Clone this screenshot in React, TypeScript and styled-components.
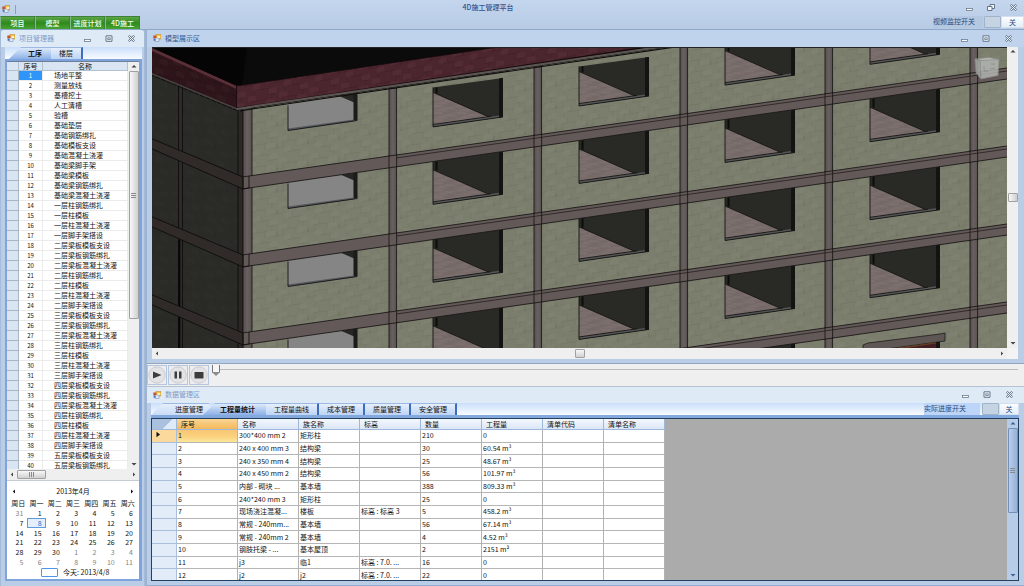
import React from "react";
import styled, { createGlobalStyle, css } from "styled-components";

const Global = createGlobalStyle`
  * { box-sizing: border-box; }
  html, body { margin: 0; padding: 0; background: #b9cde7; }
  body, button, input, table {
    font-family: "Noto Sans CJK SC", "Liberation Sans", sans-serif;
    font-size: 7px;
    line-height: 9px;
    color: #111;
  }
  button { margin: 0; padding: 0; border: 0; background: none; white-space: nowrap; }
  table { border-collapse: separate; border-spacing: 0; table-layout: fixed; }
  th, td { padding: 0; font-weight: 400; text-align: left; white-space: nowrap; overflow: hidden; }
`;

/* ---------- shell ---------- */

const Shell = styled.div`
  display: flex;
  flex-direction: column;
  height: 100vh;
  overflow: hidden;
`;

const TopBar = styled.header`
  flex: none;
  height: 30px;
  background: linear-gradient(#c3d6ee, #b8cbe4);
  border-bottom: 1px solid #8fa8c8;
`;

const TitleRow = styled.div`
  display: grid;
  grid-template-columns: 1fr auto 1fr;
  align-items: center;
  height: 16px;
  padding: 0 6px 2px 2px;
`;

const TitleLeft = styled.div`
  display: flex;
  align-items: center;
  gap: 5px;
  padding-top: 4px;
`;

const Divider = styled.span`
  width: 1px;
  height: 9px;
  background: #8ba0bd;
`;

const AppTitle = styled.h1`
  margin: 0;
  padding-right: 44px;
  font-size: 7px;
  line-height: 10px;
  font-weight: 500;
  color: #33528f;
`;

const WindowButtons = styled.div`
  display: flex;
  justify-content: flex-end;
  gap: 12px;
`;

const WindowButton = styled.button`
  width: 10px;
  height: 9px;
  display: flex;
  align-items: center;
  justify-content: center;
`;

const RibbonRow = styled.div`
  display: flex;
  justify-content: space-between;
  height: 13px;
`;

const RibbonTabs = styled.nav`
  display: flex;
`;

const RibbonTab = styled.button`
  width: 35px;
  height: 13px;
  color: #f4fff0;
  font-weight: 500;
  background: linear-gradient(#5da646, #2f8a1c 50%, #46a232);
  border: 1px solid #3f7f3c;
  border-bottom: 0;
  border-left-color: #86b98a;
  line-height: 10px;
`;

const SwitchWrap = styled.div<{ $wide?: boolean }>`
  display: flex;
  height: 12px;
  color: #2b4c7c;
  line-height: 11px;
  span {
    background: ${(p) => (p.$wide ? "#b4c8e1" : "#bcd5f8")};
    padding-right: ${(p) => (p.$wide ? "8px" : "14px")};
    margin-right: ${(p) => (p.$wide ? "1px" : "2px")};
  }
`;

const Toggle = styled.button<{ $wide?: boolean }>`
  display: grid;
  grid-template-columns: 17px ${(p) => (p.$wide ? "23px" : "20px")};
  height: 12px;
  color: #2b4c7c;
  line-height: 10px;
  i { background: #c5d3e3; border: 1px solid #9fb3cb; border-radius: 1px; }
  b { font-weight: 400; background: linear-gradient(#fbfdff, #e3edf8); border: 1px solid #d5e0ee; }
`;

const Workspace = styled.main`
  flex: 1;
  min-height: 0;
  display: flex;
  gap: 2px;
  background: #9db5d3;
`;

const RightColumn = styled.div`
  flex: 1;
  min-width: 0;
  display: flex;
  flex-direction: column;
`;

/* ---------- panels ---------- */

const Panel = styled.section`
  display: flex;
  flex-direction: column;
  min-height: 0;
  background: #b9cde7;
`;

const SidePanel = styled(Panel)`
  flex: none;
  width: 145px;
  border-left: 1px solid #a5bbd8;
  border-right: 1px solid #a5bbd8;
  border-radius: 3px 3px 0 0;
`;

const ModelPanel = styled(Panel)`
  flex: 1;
  padding: 0 6px 4px 5px;
  border-bottom: 1px solid #93a6bf;
`;

const DataPanel = styled(Panel)`
  flex: none;
  height: 200px;
  padding: 0 5px 4px 4px;
  border-top: 1px solid #b5c2d2;
  border-bottom: 1px solid #94adcc;
`;

const PanelHeader = styled.div<{ $tone: "light" | "mid" }>`
  flex: none;
  display: flex;
  align-items: center;
  justify-content: space-between;
  height: 17px;
  margin: 0 -6px 0 -5px;
  padding: 0 11px 1px 6px;
  ${(p) =>
    p.$tone === "light"
      ? css`background: #dfeaf7; color: #7e9ac6;`
      : css`background: #c0d3ec; color: #33558e;`}
`;

const SideHeader = styled(PanelHeader)`
  margin: 0;
  padding-right: 8px;
  border-radius: 3px 3px 0 0;
`;

const DataHeader = styled(PanelHeader)`
  height: 16px;
  margin: 0 -5px 0 -4px;
  padding-right: 10px;
`;

const PanelTitle = styled.h2`
  display: flex;
  align-items: center;
  gap: 4px;
  margin: 0;
  font-size: 7px;
  line-height: 9px;
  font-weight: 400;
`;

/* ---------- tabs ---------- */

const TabStrip = styled.div`
  flex: none;
  display: flex;
  height: 12px;
  background: linear-gradient(#cbdffb, #f8fbff);
`;

const Tab = styled.button`
  height: 12px;
  padding: 0 8px;
  line-height: 11px;
  background: linear-gradient(#e6effc, #bdd4f5);
  border-top: 1px solid #9db9e2;
  border-right: 2px solid #3f6dbd;
`;

const SlantTab = styled(Tab)<{ $active?: boolean }>`
  padding: 0 6px 0 24px;
  border-right: 0;
  background: ${(p) =>
    p.$active ? "linear-gradient(#dbe9fb, #8db1e6)" : "linear-gradient(#e6effc, #c8dbf7)"};
  font-weight: ${(p) => (p.$active ? 700 : 400)};
  clip-path: polygon(12px 0, 100% 0, 100% 100%, 0 100%);
`;

const OverlapTab = styled(SlantTab)`
  margin-left: -6px;
  padding: 0 11px 0 17px;
`;

const SideTab = styled(SlantTab)`
  padding: 0 9px 0 19px;
  margin-left: 4px;
`;

const StripEnd = styled.div`
  margin-left: auto;
`;

/* ---------- scroll bars ---------- */

const Bar = styled.div<{ $dir: "v" | "h"; $blue?: boolean }>`
  flex: none;
  display: flex;
  flex-direction: ${(p) => (p.$dir === "v" ? "column" : "row")};
  justify-content: space-between;
  align-items: center;
  ${(p) => (p.$dir === "v" ? "width: 11px;" : "height: 11px;")}
  background: ${(p) => (p.$blue ? "#b7cce6" : "#efefef")};
  color: ${(p) => (p.$blue ? "#3e5f92" : "#444")};
`;

const Arrow = styled.button`
  width: 10px;
  height: 9px;
  display: flex;
  align-items: center;
  justify-content: center;
  color: inherit;
`;

const Thumb = styled.div<{ $dir: "v" | "h"; $size: string; $blue?: boolean; $push?: boolean }>`
  display: flex;
  align-items: center;
  justify-content: center;
  ${(p) =>
    p.$dir === "v"
      ? css`width: 10px; height: ${p.$size}; ${p.$push && "margin-bottom: auto;"}`
      : css`height: 9px; width: ${p.$size}; ${p.$push && "margin-right: auto;"}`}
  border: 1px solid ${(p) => (p.$blue ? "#7391b8" : "#a0a0a0")};
  border-radius: 1px;
  background: ${(p) =>
    p.$blue
      ? "linear-gradient(90deg, #b9cfea, #94b1d6)"
      : p.$dir === "v"
        ? "linear-gradient(90deg, #f8f8f8, #cfcfcf)"
        : "linear-gradient(#f8f8f8, #d0d0d0)"};
`;

const TRIANGLES = {
  up: "M.5 4.5 L3 2 L5.5 4.5 Z",
  down: "M.5 2 L3 4.5 L5.5 2 Z",
  left: "M4 1.5 L1.8 3.5 L4 5.5 Z",
  right: "M2 1.5 L4.2 3.5 L2 5.5 Z",
  marker: "M1.5 .8 L5 3.5 L1.5 6.2 Z",
};

function ArrowIcon({ to }: { to: keyof typeof TRIANGLES }) {
  return (
    <svg width="6" height="7" viewBox="0 0 6 7" aria-hidden="true">
      <path d={TRIANGLES[to]} fill="currentColor" />
    </svg>
  );
}

function Grip({ dir }: { dir: "v" | "h" }) {
  return (
    <svg width="5" height="5" viewBox="0 0 5 5" aria-hidden="true">
      <path
        d={dir === "v" ? "M0 .5H5M0 2.5H5M0 4.5H5" : "M.5 0V5M2.5 0V5M4.5 0V5"}
        stroke="#8a8a8a"
      />
    </svg>
  );
}

function ScrollBar(props: { dir: "v" | "h"; size: string; blue?: boolean; push?: boolean; grip?: boolean }) {
  const { dir, size, blue, push, grip } = props;
  return (
    <Bar $dir={dir} $blue={blue}>
      <Arrow aria-label={dir === "v" ? "向上" : "向左"}>
        <ArrowIcon to={dir === "v" ? "up" : "left"} />
      </Arrow>
      <Thumb $dir={dir} $size={size} $blue={blue} $push={push}>
        {grip && <Grip dir={dir} />}
      </Thumb>
      <Arrow aria-label={dir === "v" ? "向下" : "向右"}>
        <ArrowIcon to={dir === "v" ? "down" : "right"} />
      </Arrow>
    </Bar>
  );
}

/* ---------- small icons ---------- */

function AppIcon() {
  return (
    <svg width="8" height="8" viewBox="0 0 8 8" aria-hidden="true">
      <rect x="3" y="0.5" width="5" height="4.5" fill="#f3c34b" stroke="#b98328" strokeWidth=".5" />
      <rect x="0.3" y="1.5" width="3" height="3" fill="#c9502e" />
      <rect x="2" y="4" width="4" height="3.7" fill="#dfe8f5" stroke="#6b80a6" strokeWidth=".5" />
      <rect x="4.5" y="2" width="2.6" height="2" fill="#fdf0bd" />
      <rect x="0.6" y="4.8" width="2" height="2" fill="#4f78c4" />
    </svg>
  );
}

function MinIcon() {
  return (
    <svg width="7" height="7" viewBox="0 0 7 7" aria-hidden="true">
      <rect x="0.5" y="4.5" width="6" height="2" fill="#fff" stroke="#6d7c90" strokeWidth=".8" />
    </svg>
  );
}

function MaxIcon({ restore }: { restore?: boolean }) {
  return (
    <svg width="8" height="7" viewBox="0 0 8 7" fill="#f4f7fb" stroke="#64748a" aria-hidden="true">
      {restore ? (
        <>
          <path d="M3 .5H7.5V4.5H3Z" />
          <path d="M.5 2.5H5V6.5H.5Z" />
        </>
      ) : (
        <>
          <path d="M1 .8H7V6.3H1Z" />
          <path d="M2.7 2.8H5.3V4.5H2.7Z" strokeWidth=".8" />
        </>
      )}
    </svg>
  );
}

function CloseIcon() {
  return (
    <svg width="7" height="7" viewBox="0 0 7 7" aria-hidden="true">
      <path d="M.8.8 6.2 6.2M6.2.8.8 6.2" stroke="#64748a" strokeWidth="2.2" />
      <path d="M1 1 6 6M6 1 1 6" stroke="#f6f9fd" strokeWidth="1" />
    </svg>
  );
}

function Controls({ restore }: { restore?: boolean }) {
  return (
    <WindowButtons>
      <WindowButton aria-label="最小化"><MinIcon /></WindowButton>
      <WindowButton aria-label="最大化"><MaxIcon restore={restore} /></WindowButton>
      <WindowButton aria-label="关闭"><CloseIcon /></WindowButton>
    </WindowButtons>
  );
}

function OffSwitch({ id, label, wide }: { id: string; label: string; wide?: boolean }) {
  return (
    <SwitchWrap $wide={wide}>
      <span id={id}>{label}</span>
      <Toggle role="switch" aria-checked="false" aria-labelledby={id} $wide={wide}>
        <i />
        <b>关</b>
      </Toggle>
    </SwitchWrap>
  );
}

/* ---------- process list ---------- */

const SideBody = styled.div`
  flex: 1;
  min-height: 0;
  display: flex;
  flex-direction: column;
  margin: 0 2px 5px 4px;
`;

const SideContent = styled.div`
  flex: 1;
  min-height: 0;
  display: flex;
  flex-direction: column;
  border: 2px solid #7fa3dc;
  border-right-width: 3px;
  background: #fff;
`;

const ListArea = styled.div`
  flex: 1;
  min-height: 0;
  display: flex;
  border-top: 1px solid #6d7f96;
`;

const ListClip = styled.div`
  flex: 1;
  min-width: 0;
  overflow: hidden;
`;

const ProcessTable = styled.table`
  width: 100%;
  th { height: 9px; line-height: 8px; background: #d9e5f2; border-bottom: 1px solid #b3c0cf; border-right: 1px solid #b3c0cf; text-align: center; }
  td { height: 10px; line-height: 9px; border-bottom: 1px solid #ebebeb; border-right: 1px solid #ececec; }
  td:first-child { background: #d9e5f2; border-color: #a9b5c3; }
  td:nth-child(2) { text-align: center; font-size: 6px; }
  td:last-child { padding-left: 11px; }
  tr[aria-selected="true"] td:nth-child(2) { background: #2f95f8; color: #fff; }
`;

const PROCESSES = [
  "场地平整", "测量放线", "基槽挖土", "人工清槽", "验槽", "基础垫层", "基础钢筋绑扎", "基础模板支设",
  "基础混凝土浇灌", "基础梁脚手架", "基础梁模板", "基础梁钢筋绑扎", "基础梁混凝土浇灌", "一层柱钢筋绑扎",
  "一层柱模板", "一层柱混凝土浇灌", "一层脚手架搭设", "二层梁板模板支设", "二层梁板钢筋绑扎",
  "二层梁板混凝土浇灌", "二层柱钢筋绑扎", "二层柱模板", "二层柱混凝土浇灌", "二层脚手架搭设",
  "三层梁板模板支设", "三层梁板钢筋绑扎", "三层梁板混凝土浇灌", "三层柱钢筋绑扎", "三层柱模板",
  "三层柱混凝土浇灌", "三层脚手架搭设", "四层梁板模板支设", "四层梁板钢筋绑扎", "四层梁板混凝土浇灌",
  "四层柱钢筋绑扎", "四层柱模板", "四层柱混凝土浇灌", "四层脚手架搭设", "五层梁板模板支设", "五层梁板钢筋绑扎",
];

/* ---------- calendar ---------- */

const CalendarBox = styled.div`
  flex: none;
  padding: 5px 2px 0;
  height: 99px;
  border-top: 1px solid #c4ccd6;
`;

const MonthRow = styled.div`
  display: flex;
  justify-content: space-between;
  align-items: center;
  height: 11px;
`;

const DayTable = styled.table`
  width: 100%;
  height: 68px;
  margin-top: 2px;
  th { text-align: center; }
  td { text-align: right; padding-right: 4px; line-height: 8px; }
  td[data-out="true"] { color: #858585; }
  td[aria-current="date"] {
    color: #1f6fd0;
    outline: 1px solid #5b9be0;
    outline-offset: -1px;
    background: #e4effb;
  }
`;

const TodayRow = styled.button`
  display: flex;
  align-items: center;
  gap: 5px;
  margin: 1px 0 0 32px;
  i { width: 17px; height: 9px; border: 1px solid #4f96e6; border-radius: 1px; }
`;

const WEEKDAYS = ["周日", "周一", "周二", "周三", "周四", "周五", "周六"];
const WEEKS = [
  [31, 1, 2, 3, 4, 5, 6],
  [7, 8, 9, 10, 11, 12, 13],
  [14, 15, 16, 17, 18, 19, 20],
  [21, 22, 23, 24, 25, 26, 27],
  [28, 29, 30, 1, 2, 3, 4],
  [5, 6, 7, 8, 9, 10, 11],
];

function Calendar() {
  return (
    <CalendarBox>
      <MonthRow>
        <Arrow aria-label="上个月"><ArrowIcon to="left" /></Arrow>
        <span>2013年4月</span>
        <Arrow aria-label="下个月"><ArrowIcon to="right" /></Arrow>
      </MonthRow>
      <DayTable>
        <thead>
          <tr>{WEEKDAYS.map((d) => <th key={d} scope="col">{d}</th>)}</tr>
        </thead>
        <tbody>
          {WEEKS.map((week, w) => (
            <tr key={w}>
              {week.map((day, d) => {
                const out = (w === 0 && day > 7) || (w > 3 && day < 15);
                const today = w === 1 && day === 8;
                return (
                  <td key={d} data-out={out} aria-current={today ? "date" : undefined}>{day}</td>
                );
              })}
            </tr>
          ))}
        </tbody>
      </DayTable>
      <TodayRow><i />今天: 2013/4/8</TodayRow>
    </CalendarBox>
  );
}

function ProjectPanel() {
  return (
    <SidePanel>
      <SideHeader $tone="light">
        <PanelTitle><AppIcon />项目管理器</PanelTitle>
        <Controls />
      </SideHeader>
      <SideBody>
        <TabStrip role="tablist">
          <SideTab role="tab" aria-selected="true" $active>工序</SideTab>
          <Tab role="tab" aria-selected="false">楼层</Tab>
        </TabStrip>
        <SideContent>
          <ListArea>
            <ListClip>
              <ProcessTable>
                <colgroup><col width="12" /><col width="24" /><col /></colgroup>
                <thead>
                  <tr><th /><th scope="col">序号</th><th scope="col">名称</th></tr>
                </thead>
                <tbody>
                  {PROCESSES.map((name, i) => (
                    <tr key={name} aria-selected={i === 0}>
                      <td /><td>{i + 1}</td><td>{name}</td>
                    </tr>
                  ))}
                </tbody>
              </ProcessTable>
            </ListClip>
            <ScrollBar dir="v" size="61%" push grip />
          </ListArea>
          <ScrollBar dir="h" size="29px" push grip />
          <Calendar />
        </SideContent>
      </SideBody>
    </SidePanel>
  );
}

/* ---------- model view ---------- */

const ModelFrame = styled.div`
  flex: 1;
  min-height: 0;
  display: grid;
  grid-template: minmax(0, 1fr) 11px / minmax(0, 1fr) 11px;
  background: #efefef;
`;

const Scene = styled.svg`
  display: block;
  width: 100%;
  height: 100%;
  border-top: 1px solid #222;
`;

const Corner = styled.div`
  background: #f3f3f3;
`;

const SLOPE = -0.1425;
const STOREY = 78;
const at = (x: number) => (x - 242) * SLOPE;
const COLUMNS = [389, 534, 680, 825, 970];
const BAYS = [433, 579, 725, 870];
const STOREYS = [0, 1, 2, 3, 4];

function Beam({ n }: { n: number }) {
  const y = 177 + n * STOREY;
  return (
    <g>
      <path
        d={`M242 ${y} L1010 ${y + at(1010)} V${y + 11 + at(1010)} L242 ${y + 12} Z`}
        fill="#625958"
        stroke="#1c1918"
        strokeWidth=".9"
      />
      <path d={`M397 ${y + 3 + at(397)} L1010 ${y + 3 + at(1010)}`} stroke="#2b2625" strokeWidth=".9" />
      <path
        d={`M150 ${y - 39} L243 ${y} V${y + 12} L150 ${y - 29} Z`}
        fill="#302a29"
        stroke="#0e0d0c"
        strokeWidth=".9"
      />
    </g>
  );
}

/* An opening that looks into a room: dark side wall, lit floor, sill and jambs. */
function RoomWindow({ x, n }: { x: number; n: number }) {
  const b = 204.3 + (x - 433) * -0.1432 + (n - 1) * STOREY - (n === 0 ? -0.6 : 0);
  const h = n === 0 ? 39.5 : 44;
  return (
    <g>
      <path d={`M${x} ${b - h} L${x + 70} ${b - h - 9.5} V${b - 10} L${x} ${b} Z`} fill="#292a25" />
      <path d={`M${x} ${b - 34.5} L${x + 58} ${b - 9} L${x} ${b - 1} Z`} fill="url(#slab)" />
      <path d={`M${x} ${b - 34.5} L${x + 58} ${b - 9}`} stroke="#11110f" strokeWidth=".8" />
      <path d={`M${x + 2.5} ${b - h} h2 V${b - 33.5} l-2 -1 Z`} fill="#0c0c0b" />
      <path d={`M${x + 66} ${b - h - 9} l4 -.6 V${b - 10} l-4 .6 Z`} fill="#131312" />
      <path d={`M${x} ${b - 1} L${x + 66} ${b - 10.5}`} stroke="#535557" strokeWidth="2" />
      <path
        d={`M${x} ${b - h} V${b} L${x + 70} ${b - 10} M${x} ${b - 2.4} L${x + 58} ${b - 10.6}`}
        fill="none"
        stroke="#141412"
        strokeWidth=".9"
      />
    </g>
  );
}

/* The first bay is seen through to the sky, so its opening is a flat grey. */
function SkyWindow({ n }: { n: number }) {
  const b = 130.5 + n * STOREY;
  return (
    <g>
      <path d={`M288 ${b - 26} L357 ${b - 36.5} V${b - 10} L288 ${b} Z`} fill="#858585" />
      <path d={`M338 ${b - 35} L357 ${b - 38} V${b - 27} L353 ${b - 28.5} Z`} fill="#262722" />
      <path d={`M353.5 ${b - 36} h4 V${b - 10} h-4 Z`} fill="#1b1b1a" />
      <path d={`M288 ${b - 1} L354 ${b - 10}`} stroke="#55585c" strokeWidth="1.8" />
      <path d={`M288 ${b - 25} V${b} L357 ${b - 10}`} fill="none" stroke="#151514" strokeWidth=".9" />
    </g>
  );
}

function Brick({ id, angle, base, line, alt, tick }: {
  id: string; angle: number; base: string; line: string; alt: string; tick: string;
}) {
  return (
    <pattern id={id} width="31" height="22" patternUnits="userSpaceOnUse" patternTransform={`skewY(${angle})`}>
      <rect width="31" height="22" fill={base} />
      <path d="M0 0h9v5.5h-9zM17 5.5h10v5.5h-10zM5 11h8v5.5h-8zM20 16.5h9v5.5h-9z" fill={alt} />
      <path
        d="M3 5.5h16M22 11h9M0 11h7M9 16.5h14M19 .3h10M9 0v5.5M24 0v5.5M4 5.5v5.5M17 5.5v5.5M13 11v5.5M6 16.5v5.5M20 16.5v5.5"
        stroke={line}
        strokeWidth=".5"
      />
      <path d="M29 8v4" stroke={tick} strokeWidth=".7" />
    </pattern>
  );
}

function Building() {
  return (
    <Scene viewBox="152 47 855 302" preserveAspectRatio="xMidYMid slice" role="img" aria-label="建筑模型">
      <defs>
        <Brick id="wall" angle={-8.1} base="#7b7e6c" line="#6f7161" alt="#7e816f" tick="#686a5c" />
        <Brick id="shade" angle={23.3} base="#2a2b26" line="#262723" alt="#2c2d28" tick="#23241f" />
        <Brick id="parapet" angle={-8.1} base="#4b262e" line="#3b1b21" alt="#532b34" tick="#3b1b21" />
        <Brick id="parapetShade" angle={23.3} base="#2d151a" line="#220f13" alt="#331a1f" tick="#220f13" />
        <pattern id="slab" width="24" height="7" patternUnits="userSpaceOnUse">
          <rect width="24" height="7" fill="#786c6a" />
          <path d="M1 1h9M13 3h8M4 5h10" stroke="#807372" strokeWidth=".9" />
          <path d="M12 1h8M0 4h7M16 6h7" stroke="#706463" strokeWidth=".8" />
        </pattern>
        <linearGradient id="post" x1="0" x2="1">
          <stop offset="0" stopColor="#564f4e" />
          <stop offset=".5" stopColor="#696160" />
          <stop offset="1" stopColor="#575050" />
        </linearGradient>
      </defs>

      <rect x="140" y="0" width="900" height="400" fill="#050505" />
      <path d="M242 86 L248 40 H560 Z" fill="#0b0b0b" />

      <path d="M150 72 L240 109 V360 H150 Z" fill="url(#shade)" />
      <path d="M240 110 L690 44 H1020 V360 H240 Z" fill="url(#wall)" />

      <path d="M178.5 84 h4 V360 h-4 Z" fill="#2f2928" stroke="#0e0d0c" strokeWidth=".9" />
      <path d="M178.3 240 h2 V360 h-2 Z" fill="#080808" />

      {STOREYS.map((n) => <SkyWindow key={n} n={n} />)}
      {BAYS.map((x) => STOREYS.slice(0, x === 870 ? 4 : 5).map((n) => <RoomWindow key={`${x}-${n}`} x={x} n={n} />))}

      {COLUMNS.map((x) => (
        <rect key={x} x={x} y={Math.max(40, 110 + (x - 240) * -0.147)} width="7.6" height="330"
          fill="url(#post)" stroke="#1d1a19" strokeWidth=".9" />
      ))}
      <rect x="238" y="108" width="5" height="260" fill="#2d2827" stroke="#0e0d0c" strokeWidth=".9" />
      <rect x="243" y="108" width="9" height="260" fill="url(#post)" stroke="#1d1a19" strokeWidth=".9" />

      {STOREYS.map((n) => <Beam key={n} n={n} />)}
      {COLUMNS.map((x) =>
        STOREYS.map((n) => (
          <path
            key={`${x}-${n}`}
            d={`M${x} ${177 + n * STOREY + at(x) - 1} v13 M${x + 7.6} ${177 + n * STOREY + at(x) - 2} v13`}
            stroke="#1d1a19"
            strokeWidth=".9"
          />
        )),
      )}
      {STOREYS.map((n) => (
        <path key={n} d={`M243 ${177 + n * STOREY} v12 l6 -1 V${176 + n * STOREY}`} fill="none" stroke="#141211" strokeWidth=".9" />
      ))}

      <path d="M150 47.5 L236.5 86 V108 L150 72 Z" fill="url(#parapetShade)" />
      <path d="M150 47 L236.5 86 L236.5 89 L150 50 Z" fill="#5a2f38" />
      <path d="M150 73 L237 109" stroke="#48403f" strokeWidth="1.6" />
      <path d="M150 74.5 L237 110.5" stroke="#0c0b0b" strokeWidth=".9" strokeDasharray="5 1" />
      <path d="M236.5 86 L505 46 H652 L236.5 108 Z" fill="url(#parapet)" stroke="#170a0d" strokeWidth=".8" />
      <path d="M236.5 109 L670 45.5" stroke="#5c5653" strokeWidth="2.2" />
      <path d="M240 110.8 L690 44.8" stroke="#0f0e0d" strokeWidth="1.2" />

      <path d="M863 345 L868 343 L940 334 L945 333 V341 L872 351 H863 Z" fill="#5f5756" stroke="#1d1a19" strokeWidth=".8" />
      <path d="M893 349.5 L936 343 V352 H893 Z" fill="#431f26" />
      <path d="M890 349.5 L936 343" stroke="#6a3a1c" strokeWidth="1.2" />
      <path d="M936 342 h4 V352 h-4 Z" fill="#161514" />

      <g opacity=".85" stroke="#8d908f" strokeWidth=".7">
        <path d="M975 59 L989 57.5 L999 59.5 L987 61.5 Z" fill="#c3c5c3" />
        <path d="M975 59 L980 60.5 L981 79 L976 73 Z" fill="#a5a7a4" />
        <path d="M980 60.5 L999 59.5 L998 75.5 L981 79 Z" fill="#b2b4b1" />
        <path d="M984 66 v5 h4 M991 64 h4 M990 69 l5 -1" fill="none" stroke="#8a8c8a" />
      </g>
    </Scene>
  );
}

/* ---------- player ---------- */

const Player = styled.div`
  flex: none;
  display: flex;
  height: 22px;
  padding: 1px 6px 1px 0;
  background: #efefef;
`;

const PlayerButton = styled.button`
  width: 20px;
  height: 20px;
  margin-right: 1px;
  display: flex;
  align-items: center;
  justify-content: center;
  border: 1px solid #b5c6de;
  background: #ededf0;
`;

const Timeline = styled.input`
  appearance: none;
  flex: 1;
  min-width: 0;
  height: 11px;
  margin: 0 0 0 2px;
  background: linear-gradient(#bcbcbc, #bcbcbc) 0 4px / 100% 1px no-repeat;
  &::-webkit-slider-thumb {
    appearance: none;
    width: 8px;
    height: 11px;
    background:
      linear-gradient(transparent 60%, #8c8c8c 60%),
      linear-gradient(90deg, #777 1px, #f6f6f6 1px 7px, #777 7px);
    clip-path: polygon(0 0, 100% 0, 100% 65%, 50% 100%, 0 65%);
  }
`;

function PlayerIcon({ d }: { d: string }) {
  return (
    <svg width="18" height="18" viewBox="0 0 18 18" aria-hidden="true">
      <circle cx="9" cy="9" r="8.2" fill="#e3e3e6" stroke="#c3c5cb" strokeWidth=".8" />
      <path d={d} fill="#3c3c3c" />
    </svg>
  );
}

/* ---------- data grid ---------- */

const GridFrame = styled.div`
  flex: 1;
  min-height: 0;
  display: flex;
  border: 1px solid #24405f;
  background: #ababab;
`;

const GridEdge = styled.div`
  flex: none;
  height: 3px;
  background: #84a9de;
`;

const GridClip = styled.div`
  flex: 1;
  min-width: 0;
  overflow: hidden;
`;

const DataTable = styled.table`
  width: 513px;
  height: 163px;
  background: #fff;
  th, td { border-right: 1px solid #b2b2b2; border-bottom: 1px solid #b5b5b5; line-height: 9px; }
  th { height: 11px; }
  thead th { padding-left: 4px; background: linear-gradient(#f4f8fe, #dbe6f6); border-color: #9db8dc; }
  thead th:first-child { padding: 0; background: linear-gradient(135deg, #a9c0de 60%, #dfeaf8 60%); }
  thead th:nth-child(2) { background: linear-gradient(#fbd595, #f3b95a); }
  tbody th { background: #e2ecf9; border-color: #a9bfdb; padding-left: 3px; }
  td { padding-left: 1px; }
  tr[aria-selected="true"] th { background: #fbd89c; }
  tr[aria-selected="true"] td:nth-child(2) { background: linear-gradient(#f9c673, #fbd27e 55%, #fde79a); }
`;

const COLUMNS_TEXT = ["序号", "名称", "族名称", "标高", "数量", "工程量", "清单代码", "清单名称"];
const ROWS = [
  ["300*400 mm 2", "矩形柱", "", "210", "0"],
  ["240 x 400 mm 3", "结构梁", "", "30", "60.54 m³"],
  ["240 x 350 mm 4", "结构梁", "", "25", "48.67 m³"],
  ["240 x 450 mm 2", "结构梁", "", "56", "101.97 m³"],
  ["内部 - 砌块 ...", "基本墙", "", "388", "809.33 m³"],
  ["240*240 mm 3", "矩形柱", "", "25", "0"],
  ["现场浇注混凝...", "楼板", "标高 : 标高 3", "5", "458.2 m³"],
  ["常规 - 240mm...", "基本墙", "", "56", "67.14 m³"],
  ["常规 - 240mm 2", "基本墙", "", "4", "4.52 m³"],
  ["钢肢托梁 - ...", "基本屋顶", "", "2", "2151 m²"],
  ["j3", "临1", "标高 : 7.0. ...", "16", "0"],
  ["j2", "j2", "标高 : 7.0. ...", "22", "0"],
];

function DataSection() {
  return (
    <DataPanel>
      <DataHeader $tone="light">
        <PanelTitle><AppIcon />数据管理区</PanelTitle>
        <Controls />
      </DataHeader>
      <TabStrip role="tablist">
        <SlantTab role="tab" aria-selected="false">进度管理</SlantTab>
        <OverlapTab role="tab" aria-selected="true" $active>工程量统计</OverlapTab>
        {["工程量曲线", "成本管理", "质量管理", "安全管理"].map((t) => (
          <Tab key={t} role="tab" aria-selected="false">{t}</Tab>
        ))}
        <StripEnd>
          <OffSwitch id="progress-switch" label="实际进度开关" />
        </StripEnd>
      </TabStrip>
      <GridEdge />
      <GridFrame>
        <GridClip>
          <DataTable>
            <colgroup>
              <col width="25" />
              {COLUMNS_TEXT.map((c) => <col key={c} width="61" />)}
            </colgroup>
            <thead>
              <tr><th />{COLUMNS_TEXT.map((c) => <th key={c} scope="col">{c}</th>)}</tr>
            </thead>
            <tbody>
              {ROWS.map((row, i) => (
                <tr key={i} aria-selected={i === 0}>
                  <th>{i === 0 && <ArrowIcon to="marker" />}</th>
                  <td>{i + 1}</td>
                  {row.map((cell, c) => <td key={c}>{cell}</td>)}
                  <td /><td />
                </tr>
              ))}
            </tbody>
          </DataTable>
        </GridClip>
        <ScrollBar dir="v" size="53%" blue push grip />
      </GridFrame>
    </DataPanel>
  );
}

export default function App() {
  return (
    <>
      <Global />
      <Shell>
        <TopBar>
          <TitleRow>
            <TitleLeft><AppIcon /><Divider /></TitleLeft>
            <AppTitle>4D施工管理平台</AppTitle>
            <Controls restore />
          </TitleRow>
          <RibbonRow>
            <RibbonTabs>
              {["项目", "模型", "进度计划", "4D施工"].map((t) => <RibbonTab key={t}>{t}</RibbonTab>)}
            </RibbonTabs>
            <OffSwitch id="video-switch" label="视频监控开关" wide />
          </RibbonRow>
        </TopBar>
        <Workspace>
          <ProjectPanel />
          <RightColumn>
            <ModelPanel>
              <PanelHeader $tone="mid">
                <PanelTitle><AppIcon />模型展示区</PanelTitle>
                <Controls />
              </PanelHeader>
              <ModelFrame>
                <Building />
                <ScrollBar dir="v" size="9px" />
                <ScrollBar dir="h" size="10px" />
                <Corner />
              </ModelFrame>
            </ModelPanel>
            <Player>
              <PlayerButton aria-label="播放"><PlayerIcon d="M5 5.5 L13.5 9 L5 12.5 Z" /></PlayerButton>
              <PlayerButton aria-label="暂停"><PlayerIcon d="M5.5 5.5h2.5v7h-2.5zM10 5.5h2.5v7h-2.5z" /></PlayerButton>
              <PlayerButton aria-label="停止"><PlayerIcon d="M4.5 6h9v6.5h-9z" /></PlayerButton>
              <Timeline type="range" min={0} max={100} defaultValue={0} aria-label="进度" />
            </Player>
            <DataSection />
          </RightColumn>
        </Workspace>
      </Shell>
    </>
  );
}
